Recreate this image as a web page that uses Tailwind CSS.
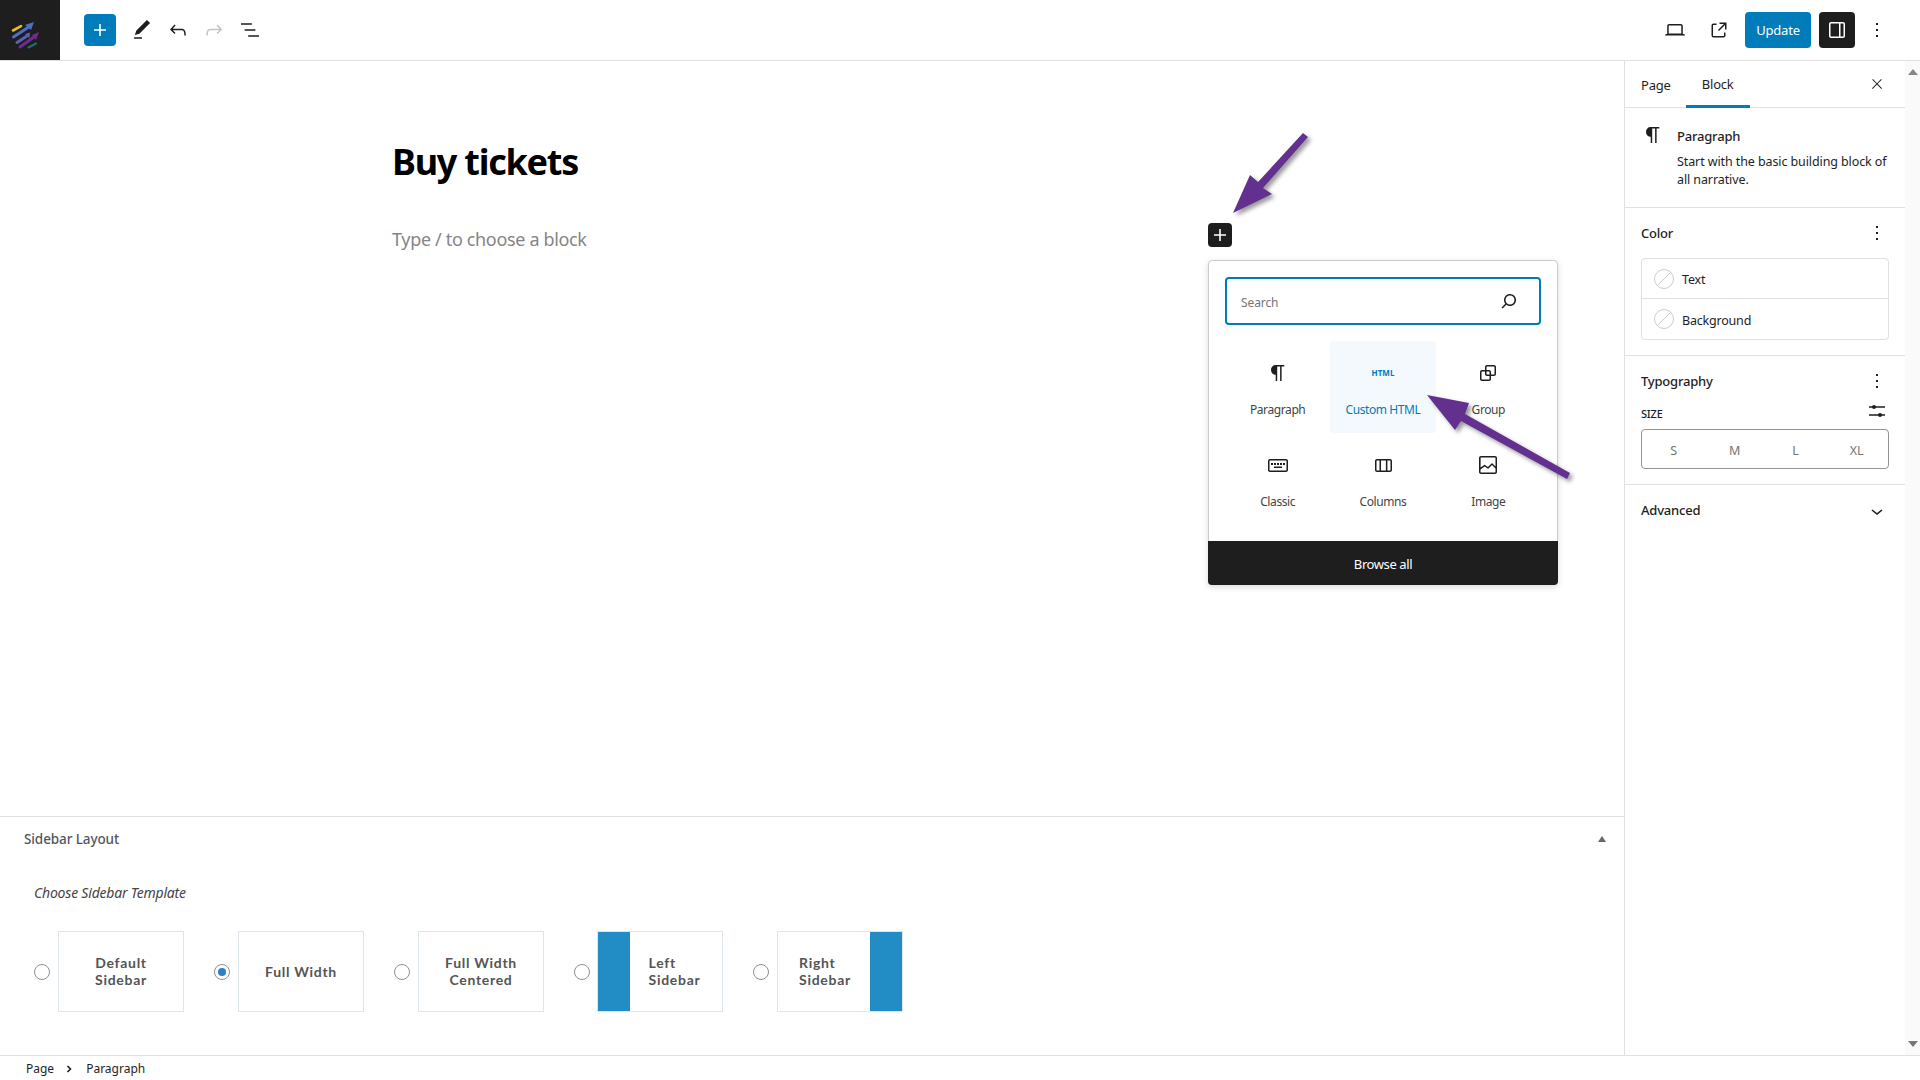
<!DOCTYPE html>
<html lang="en">
<head>
    <meta charset="UTF-8">
    <meta name="viewport" content="width=device-width, initial-scale=1.0">
    <title>Edit Page - Buy tickets</title>
    <script src="https://cdn.jsdelivr.net/npm/@tailwindcss/browser@4"></script>
</head>
<body class="relative h-screen overflow-hidden bg-white font-['Noto_Sans',sans-serif] text-[13px] text-[#1e1e1e] flex flex-col">

    <!-- top bar -->
    <header class="h-[61px] shrink-0 flex items-center border-b border-[#e0e0e0]">
        <div class="w-[60px] h-[60px] bg-[#1e1e1e]">
            <svg width="60" height="60" viewBox="0 0 60 60" fill="none" stroke-linecap="round">
                <path d="M13 30.5L21 26.2" stroke="#e9b92c" stroke-width="2.6"/>
                <path d="M13.5 37L28 27.5" stroke="#4b70c4" stroke-width="3"/>
                <path d="M25 25L34 22L31 30z" fill="#4b70c4"/>
                <path d="M17 42.5L27 36" stroke="#5a5fb8" stroke-width="3"/>
                <path d="M25 34L30 32.5L29.5 38z" fill="#5a5fb8"/>
                <path d="M20 47L34 37" stroke="#6f2c8f" stroke-width="3"/>
                <path d="M32 35L39 32L36 40z" fill="#6f2c8f"/>
                <path d="M28.5 47.5L36 43.5" stroke="#1f6f78" stroke-width="2"/>
            </svg>
        </div>
        <button class="ml-6 w-8 h-8 rounded-sm bg-[#007cba] flex items-center justify-center">
            <svg width="24" height="24" viewBox="0 0 24 24" fill="#fff"><path d="M18 11.2h-5.2V6h-1.6v5.2H6v1.6h5.2V18h1.6v-5.2H18z"/></svg>
        </button>
        <div class="ml-[14px] w-6 h-6 flex items-center justify-center">
            <svg width="24" height="24" viewBox="0 0 24 24" fill="#1e1e1e"><path d="M20.1 5.1L16.9 2 6.2 12.7l-1.3 4.4 4.5-1.3L20.1 5.1zM4 20.8h8v-1.5H4v1.5z"/></svg>
        </div>
        <div class="ml-[12px] w-6 h-6">
            <svg width="24" height="24" viewBox="0 0 24 24" fill="#1e1e1e"><path d="M18.3 11.7c-.6-.6-1.4-.9-2.3-.9H6.7l2.9-3.3-1.1-1-4.5 5L8.5 16l1-1-2.7-2.7H16c.5 0 .9.2 1.3.5 1 1 1 3.4 1 4.5v.3h1.5v-.2c0-1.5 0-4.3-1.5-5.7z"/></svg>
        </div>
        <div class="ml-[12px] w-6 h-6">
            <svg width="24" height="24" viewBox="0 0 24 24" fill="#c4c4c4"><path d="M15.6 6.5l-1.1 1 2.9 3.3H8c-.9 0-1.7.3-2.3.9-1.4 1.5-1.4 4.2-1.4 5.6v.2h1.5v-.3c0-1.1 0-3.5 1-4.5.3-.3.7-.5 1.3-.5h9.2L14.5 15l1.1 1.1 4.6-4.6-4.6-5z"/></svg>
        </div>
        <div class="ml-[12px] w-6 h-6">
            <svg width="24" height="24" viewBox="0 0 24 24" fill="#1e1e1e"><path d="M13.8 5.2H3v1.5h10.8V5.2zm-3.6 12v1.5H21v-1.5H10.2zm7.2-6H6.6v1.5h10.8v-1.5z"/></svg>
        </div>

        <div class="ml-auto flex items-center pr-[31px]">
            <svg width="24" height="24" viewBox="0 0 24 24" fill="#1e1e1e"><path d="M20.5 16h-.7V8c0-1.1-.9-2-2-2H6.2c-1.1 0-2 .9-2 2v8h-.7c-.8 0-1.5.7-1.5 1.5h20c0-.8-.7-1.5-1.5-1.5zM5.7 8c0-.3.2-.5.5-.5h11.6c.3 0 .5.2.5.5v7.6H5.7V8z"/></svg>
            <svg class="ml-5" width="24" height="24" viewBox="0 0 24 24" fill="#1e1e1e"><path d="M19.5 4.5h-7V6h4.44l-5.97 5.97 1.06 1.06L18 7.06v4.44h1.5v-7Zm-13 1a2 2 0 0 0-2 2v10a2 2 0 0 0 2 2h10a2 2 0 0 0 2-2v-3H17v3a.5.5 0 0 1-.5.5h-10a.5.5 0 0 1-.5-.5v-10a.5.5 0 0 1 .5-.5h3V5.5h-3Z"/></svg>
            <button class="ml-[14px] w-[66px] h-9 pt-[2px] rounded-sm bg-[#007cba] text-white text-[13px] tracking-[-0.2px]">Update</button>
            <button class="ml-2 w-9 h-9 rounded-sm bg-[#1e1e1e] flex items-center justify-center">
                <svg width="24" height="24" viewBox="0 0 24 24" fill="#fff"><path d="M18 4H6c-1.1 0-2 .9-2 2v12c0 1.1.9 2 2 2h12c1.1 0 2-.9 2-2V6c0-1.1-.9-2-2-2zm-4 14.5H6c-.3 0-.5-.2-.5-.5V6c0-.3.2-.5.5-.5h8v13zm4.5-.5c0 .3-.2.5-.5.5h-2.5v-13H18c.3 0 .5.2.5.5v12z"/></svg>
            </button>
            <svg class="ml-[10px]" width="24" height="24" viewBox="0 0 24 24" fill="#1e1e1e"><path d="M13 19h-2v-2h2v2zm0-6h-2v-2h2v2zm0-6h-2V5h2v2z"/></svg>
        </div>
    </header>

    <div class="flex-1 min-h-0 flex">
        <!-- editor + meta box -->
        <main class="w-[1624px] shrink-0 flex flex-col">
            <div class="relative flex-1 min-h-0 pl-[392px] pt-[76px]">
                <h1 class="text-[36px] leading-[50px] font-bold text-black tracking-[-1.25px]">Buy tickets</h1>
                <p class="mt-[40px] text-[18px] leading-[25px] text-[#858585] tracking-[-0.34px]">Type / to choose a block</p>

                <!-- inline inserter -->
                <button class="absolute left-[1208px] top-[162px] w-6 h-6 rounded-sm bg-[#1e1e1e] flex items-center justify-center">
                    <svg width="24" height="24" viewBox="0 0 24 24" fill="#fff"><path d="M18 11.2h-5.2V6h-1.6v5.2H6v1.6h5.2V18h1.6v-5.2H18z"/></svg>
                </button>
                <div class="absolute left-[1208px] top-[199px] w-[350px] h-[325px] bg-white border border-[#ccc] rounded-sm shadow-[0_2px_6px_rgba(0,0,0,0.15)] flex flex-col">
                    <div class="mx-4 mt-4 h-[48px] shrink-0 border-2 border-[#007cba] rounded-sm flex items-center justify-between pl-[14px] pr-[18px]">
                        <span class="pt-[3px] text-[#757575] text-[12px] tracking-[-0.1px]">Search</span>
                        <svg width="24" height="24" viewBox="0 0 24 24" fill="#1e1e1e"><path d="M13 5c-3.3 0-6 2.7-6 6 0 1.4.5 2.7 1.3 3.7l-3.8 3.8 1.1 1.1 3.8-3.8c1 .8 2.3 1.3 3.7 1.3 3.3 0 6-2.7 6-6S16.3 5 13 5zm0 10.5c-2.5 0-4.5-2-4.5-4.5s2-4.5 4.5-4.5 4.5 2 4.5 4.5-2 4.5-4.5 4.5z"/></svg>
                    </div>
                    <div class="mx-4 mt-4 grid grid-cols-3 auto-rows-[92px] text-[12px] text-center text-[#444] tracking-[-0.4px] flex-1">
                        <div class="flex flex-col items-center pt-[20px]">
                            <svg width="24" height="24" viewBox="0 0 24 24" fill="#1e1e1e"><path d="M18.3 4H9.9v-.1l-.9.2c-2.3.4-4 2.4-4 4.8s1.7 4.4 4 4.8l.7.1V20h1.5V5.5h2.9V20h1.5V5.5h2.7V4z"/></svg>
                            <span class="mt-[16px]">Paragraph</span>
                        </div>
                        <div class="flex flex-col items-center pt-[20px] rounded-sm bg-[#f3f9fc] text-[#007cba]">
                            <span class="h-6 flex items-center text-[8px] font-bold tracking-normal">HTML</span>
                            <span class="mt-[16px]">Custom HTML</span>
                        </div>
                        <div class="flex flex-col items-center pt-[20px]">
                            <svg width="24" height="24" viewBox="0 0 24 24" fill="#1e1e1e"><path d="M18 4h-7c-1.1 0-2 .9-2 2v3H6c-1.1 0-2 .9-2 2v7c0 1.1.9 2 2 2h7c1.1 0 2-.9 2-2v-3h3c1.1 0 2-.9 2-2V6c0-1.1-.9-2-2-2zm-4.5 14c0 .3-.2.5-.5.5H6c-.3 0-.5-.2-.5-.5v-7c0-.3.2-.5.5-.5h3V13c0 1.1.9 2 2 2h2.5v3zm0-4.5H11c-.3 0-.5-.2-.5-.5v-2.5H13c.3 0 .5.2.5.5v2.5zm5-.5c0 .3-.2.5-.5.5h-3V11c0-1.1-.9-2-2-2h-2.5V6c0-.3.2-.5.5-.5h7c.3 0 .5.2.5.5v7z"/></svg>
                            <span class="mt-[16px]">Group</span>
                        </div>
                        <div class="flex flex-col items-center pt-[20px]">
                            <svg width="24" height="24" viewBox="0 0 24 24" fill="#1e1e1e"><path d="M20 6H4c-1.1 0-2 .9-2 2v9c0 1.1.9 2 2 2h16c1.1 0 2-.9 2-2V8c0-1.1-.9-2-2-2zm.5 11c0 .3-.2.5-.5.5H4c-.3 0-.5-.2-.5-.5V8c0-.3.2-.5.5-.5h16c.3 0 .5.2.5.5v9zM10 10H8v2h2v-2zm-5 0v2h2v-2H5zm6 2h2v-2h-2v2zm6 0h2v-2h-2v2zm-3 0h2v-2h-2v2zm-6 3h8v-1.5H8V15z"/></svg>
                            <span class="mt-[16px]">Classic</span>
                        </div>
                        <div class="flex flex-col items-center pt-[20px]">
                            <svg width="24" height="24" viewBox="0 0 24 24" fill="#1e1e1e"><path d="M19 6H6c-1.1 0-2 .9-2 2v9c0 1.1.9 2 2 2h13c1.1 0 2-.9 2-2V8c0-1.1-.9-2-2-2zm-4.1 1.5v10H10v-10h4.9zM5.5 17V8c0-.3.2-.5.5-.5h2.5v10H6c-.3 0-.5-.2-.5-.5zm14 0c0 .3-.2.5-.5.5h-2.6v-10H19c.3 0 .5.2.5.5v9z"/></svg>
                            <span class="mt-[16px]">Columns</span>
                        </div>
                        <div class="flex flex-col items-center pt-[20px]">
                            <svg width="24" height="24" viewBox="0 0 24 24" fill="#1e1e1e"><path d="M19 3H5c-1.1 0-2 .9-2 2v14c0 1.1.9 2 2 2h14c1.1 0 2-.9 2-2V5c0-1.1-.9-2-2-2zM5 4.5h14c.3 0 .5.2.5.5v8.4l-3-2.9c-.3-.3-.8-.3-1 0L11.9 14 9 12c-.3-.2-.6-.2-.8 0l-3.6 2.6V5c-.1-.3.1-.5.4-.5zm14 15H5c-.3 0-.5-.2-.5-.5v-2.4l4.1-3 3 1.9c.3.2.7.2.9-.1L16 12l3.5 3.4V19c0 .3-.2.5-.5.5z"/></svg>
                            <span class="mt-[16px]">Image</span>
                        </div>
                    </div>
                    <button class="h-[44px] shrink-0 -mx-px -mb-px pt-[4px] bg-[#1e1e1e] text-white text-[13px] tracking-[-0.4px] rounded-b-sm">Browse all</button>
                </div>
            </div>

            <!-- Sidebar Layout meta box -->
            <section class="h-[239px] shrink-0 border-t border-[#e0e0e0] px-6 relative">
                <div class="flex items-center justify-between h-[43px]">
                    <h2 class="pt-[2px] text-[13.5px] font-medium text-[#50575e] tracking-[-0.1px]">Sidebar Layout</h2>
                    <span class="mr-[-6px] w-0 h-0 border-x-[4px] border-x-transparent border-b-[6px] border-b-[#646970]"></span>
                </div>
                <p class="pl-[10px] mt-[23px] text-[14px] leading-[20px] italic text-[#444] tracking-[-0.2px]">Choose Sidebar Template</p>
                <div class="mt-[28px] pl-[10px] flex font-['Lato',sans-serif] font-bold text-[14px] leading-[17px] tracking-[0.7px] text-[#555]">
                    <label class="w-[180px] flex items-center gap-2">
                        <span class="w-4 h-4 rounded-full border border-[#8c8f94] bg-white"></span>
                        <span class="w-[126px] h-[81px] pb-[1px] border border-[#dde6ea] flex items-center justify-center text-center">Default<br>Sidebar</span>
                    </label>
                    <label class="w-[180px] flex items-center gap-2">
                        <span class="w-4 h-4 rounded-full border border-[#8c8f94] bg-white flex items-center justify-center"><span class="w-2 h-2 rounded-full bg-[#2f7fc4]"></span></span>
                        <span class="w-[126px] h-[81px] pb-[1px] border border-[#dde6ea] flex items-center justify-center text-center">Full Width</span>
                    </label>
                    <label class="w-[180px] flex items-center gap-2">
                        <span class="w-4 h-4 rounded-full border border-[#8c8f94] bg-white"></span>
                        <span class="w-[126px] h-[81px] pb-[1px] border border-[#dde6ea] flex items-center justify-center text-center">Full Width<br>Centered</span>
                    </label>
                    <label class="w-[179px] flex items-center gap-[7px]">
                        <span class="w-4 h-4 rounded-full border border-[#8c8f94] bg-white"></span>
                        <span class="w-[126px] h-[81px] border border-[#dde6ea] flex items-stretch">
                            <span class="w-[32px] bg-[#228cc4]"></span>
                            <span class="flex-1 flex items-center justify-center -ml-[3px] pb-[1px]">Left<br>Sidebar</span>
                        </span>
                    </label>
                    <label class="w-[180px] flex items-center gap-2">
                        <span class="w-4 h-4 rounded-full border border-[#8c8f94] bg-white"></span>
                        <span class="w-[126px] h-[81px] border border-[#dde6ea] flex items-stretch">
                            <span class="flex-1 flex items-center justify-center -mr-[2px] pb-[1px]">Right<br>Sidebar</span>
                            <span class="w-[32px] bg-[#228cc4]"></span>
                        </span>
                    </label>
                </div>
            </section>
        </main>

        <!-- settings sidebar -->
        <aside class="w-[281px] shrink-0 border-l border-[#e0e0e0] flex flex-col tracking-[-0.2px]">
            <div class="h-[47px] shrink-0 border-b border-[#e0e0e0] flex items-stretch relative">
                <span class="pl-4 pr-4 pt-[3px] flex items-center">Page</span>
                <span class="w-[64px] pt-[3px] flex items-center justify-center border-b-[3px] border-[#007cba] h-[47px] ml-[-1px]">Block</span>
                <svg class="absolute right-[20px] top-[15px]" width="16" height="16" viewBox="0 0 24 24" fill="#1e1e1e"><path d="M13 11.8l6.1-6.3-1-1-6.1 6.2-6.1-6.2-1 1 6.1 6.3-6.5 6.7 1 1 6.5-6.6 6.5 6.6 1-1z"/></svg>
            </div>
            <div class="h-[100px] shrink-0 border-b border-[#e0e0e0] pt-4 pl-4 pr-3 flex">
                <svg class="-mt-[1px] shrink-0" width="24" height="24" viewBox="0 0 24 24" fill="#1e1e1e"><path d="M18.3 4H9.9v-.1l-.9.2c-2.3.4-4 2.4-4 4.8s1.7 4.4 4 4.8l.7.1V20h1.5V5.5h2.9V20h1.5V5.5h2.7V4z"/></svg>
                <div class="ml-[12px]">
                    <div class="font-medium leading-[24px]">Paragraph</div>
                    <p class="text-[12.5px] leading-[18px] mt-[5px] tracking-[-0.1px]">Start with the basic building block of all narrative.</p>
                </div>
            </div>
            <div class="h-[148px] shrink-0 border-b border-[#e0e0e0] px-4">
                <div class="h-[50px] pt-[2px] flex items-center justify-between">
                    <span class="font-medium">Color</span>
                    <svg class="-mt-[2px]" width="24" height="24" viewBox="0 0 24 24" fill="#1e1e1e"><path d="M13 19h-2v-2h2v2zm0-6h-2v-2h2v2zm0-6h-2V5h2v2z"/></svg>
                </div>
                <div class="w-[248px] border border-[#e0e0e0] rounded-sm">
                    <div class="h-[40px] flex items-center pl-3 gap-2 border-b border-[#e0e0e0]">
                        <svg width="20" height="20" viewBox="0 0 20 20" fill="none" stroke="#ccc"><circle cx="10" cy="10" r="9.5"/><path d="M3.5 16.5L16.5 3.5"/></svg>
                        <span class="pt-[4px] text-[12.5px]">Text</span>
                    </div>
                    <div class="h-[40px] flex items-center pl-3 gap-2">
                        <svg width="20" height="20" viewBox="0 0 20 20" fill="none" stroke="#ccc"><circle cx="10" cy="10" r="9.5"/><path d="M3.5 16.5L16.5 3.5"/></svg>
                        <span class="pt-[4px] text-[12.5px]">Background</span>
                    </div>
                </div>
            </div>
            <div class="h-[129px] shrink-0 border-b border-[#e0e0e0] px-4">
                <div class="h-[50px] pt-[2px] flex items-center justify-between">
                    <span class="font-medium">Typography</span>
                    <svg class="-mt-[2px]" width="24" height="24" viewBox="0 0 24 24" fill="#1e1e1e"><path d="M13 19h-2v-2h2v2zm0-6h-2v-2h2v2zm0-6h-2V5h2v2z"/></svg>
                </div>
                <div class="flex items-center justify-between h-[24px] -mt-[7px]">
                    <span class="pt-[6px] text-[11px] font-medium uppercase">Size</span>
                    <svg width="24" height="24" viewBox="0 0 24 24" fill="#1e1e1e"><path d="M4 7.2h16v1.5H4zM4 15.2h16v1.5H4z"/><circle cx="9" cy="8" r="2"/><circle cx="15" cy="16" r="2"/></svg>
                </div>
                <div class="mt-[6px] w-[248px] h-[40px] pt-[4px] border border-[#949494] rounded-sm grid grid-cols-4 items-center text-center text-[#757575] text-[12.5px] px-[1px]">
                    <span>S</span><span>M</span><span>L</span><span>XL</span>
                </div>
            </div>
            <div class="h-[52px] shrink-0 px-4 flex items-center justify-between">
                <span class="font-medium">Advanced</span>
                <svg width="24" height="24" viewBox="0 0 24 24" fill="#1e1e1e"><path d="M17.5 11.6L12 16l-5.5-4.4.9-1.2L12 14l4.5-3.6 1 1.2z"/></svg>
            </div>
        </aside>

        <!-- page scrollbar -->
        <div class="flex-1 bg-[#fafafa] flex flex-col items-center justify-between py-[8px]">
            <span class="w-0 h-0 border-x-[5px] border-x-transparent border-b-[6px] border-b-[#888]"></span>
            <span class="w-0 h-0 border-x-[5px] border-x-transparent border-t-[6px] border-t-[#777]"></span>
        </div>
    </div>

    <!-- breadcrumb -->
    <footer class="h-[25px] shrink-0 border-t border-[#e0e0e0] flex items-center pl-[26px] pt-[2px] text-[12px]">
        <span>Page</span>
        <svg class="ml-[9px] mr-[11px]" width="12" height="12" viewBox="0 0 12 12" fill="none" stroke="#1e1e1e" stroke-width="1.6"><path d="M4.5 3L7.5 6L4.5 9"/></svg>
        <span>Paragraph</span>
    </footer>

    <!-- annotation arrows -->
    <svg class="absolute inset-0 pointer-events-none drop-shadow-[3px_3px_2px_rgba(0,0,0,0.4)]" width="1920" height="1080" viewBox="0 0 1920 1080" fill="#64308f">
        <path d="M1303 133L1308 137L1263 188L1272 194L1233 213L1250 175L1258 182z"/>
        <path d="M1427 395L1469 403L1465 414L1570 473L1567 479L1461 421L1455 430z"/>
    </svg>
</body>
</html>
